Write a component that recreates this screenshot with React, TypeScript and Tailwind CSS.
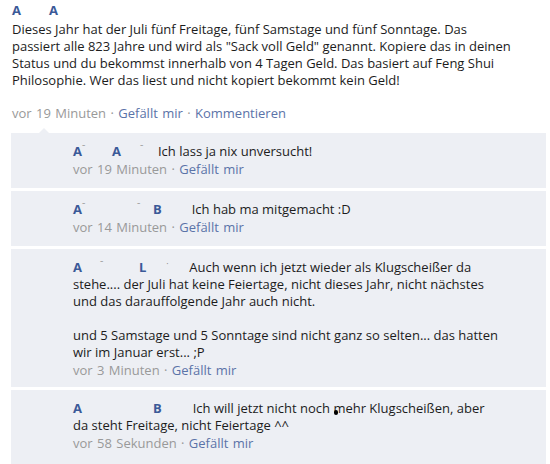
import React from "react";

const NAME = "text-[#3b5998] font-bold";

const Tick = ({ dot }: { dot?: boolean }) => (
  <span className="inline-block w-[3px] align-top text-[9px] leading-[10px] text-[#888]">
    {dot ? "·" : "ˉ"}
  </span>
);

const Meta = ({ time }: { time: string }) => (
  <div className="mt-[1px] text-[13px] leading-[17px] text-[#999] [word-spacing:1px]">
    {time} · <span className="text-[#5b73a8]">Gefällt mir</span>
  </div>
);

export default function App() {
  return (
    <div
      className="w-[550px] h-[464px] bg-white overflow-hidden text-[13px] text-[#1c1c1c]"
      style={{ fontFamily: '"Open Sans", "DejaVu Sans", sans-serif' }}
    >
      {/* Original post */}
      <div className="pl-3 pt-[2px]">
        <div className={`${NAME} leading-[17px]`}>
          A<span className="inline-block w-[28px]" />A
        </div>
        <div className="leading-[17px] mt-[2px]">
          <div>Dieses Jahr hat der Juli fünf Freitage, fünf Samstage und fünf Sonntage. Das</div>
          <div>passiert alle 823 Jahre und wird als "Sack voll Geld" genannt. Kopiere das in deinen</div>
          <div>Status und du bekommst innerhalb von 4 Tagen Geld. Das basiert auf Feng Shui</div>
          <div>Philosophie. Wer das liest und nicht kopiert bekommt kein Geld!</div>
        </div>
        <div className="mt-[16px] text-[13px] leading-[17px] text-[#999] [word-spacing:1px]">
          vor 19 Minuten · <span className="text-[#5b73a8]">Gefällt mir</span> ·{" "}
          <span className="text-[#5b73a8]">Kommentieren</span>
        </div>
      </div>

      {/* Comments */}
      <div className="relative ml-[11px] mt-[11px] w-[535px] flex flex-col gap-[3px]">
        <div className="absolute -top-[5px] left-[28px] w-0 h-0 border-x-[5px] border-x-transparent border-b-[5px] border-b-[#edeff4]" />

        <div className="bg-[#edeff4] pl-[62px] pt-[10px] pb-[10px] leading-[17px]">
          <div>
            <span className={NAME}>A</span>
            <Tick />
            <span className="inline-block w-[27px]" />
            <span className={NAME}>A</span>
            <span className="inline-block w-[19px]" />
            <Tick />
            <span className="inline-block w-[15px]" />
            Ich lass ja nix unversucht!
          </div>
          <Meta time="vor 19 Minuten" />
        </div>

        <div className="bg-[#edeff4] pl-[62px] pt-[10px] pb-[10px] leading-[17px]">
          <div>
            <span className={NAME}>A</span>
            <Tick />
            <span className="inline-block w-[52px]" />
            <Tick />
            <span className="inline-block w-[13px]" />
            <span className={NAME}>B</span>
            <span className="inline-block w-[30px]" />
            Ich hab ma mitgemacht :D
          </div>
          <Meta time="vor 14 Minuten" />
        </div>

        <div className="bg-[#edeff4] pl-[62px] pt-[10px] pb-[8px] leading-[17px]">
          <div>
            <span className={NAME}>A</span>
            <span className="inline-block w-[18px]" />
            <Tick />
            <span className="inline-block w-[36px]" />
            <span className={NAME}>L</span>
            <span className="inline-block w-[20px]" />
            <Tick dot />
            <span className="inline-block w-[20px]" />
            Auch wenn ich jetzt wieder als Klugscheißer da
          </div>
          <div>stehe.... der Juli hat keine Feiertage, nicht dieses Jahr, nicht nächstes</div>
          <div>und das darauffolgende Jahr auch nicht.</div>
          <div className="h-[17px]" />
          <div>und 5 Samstage und 5 Sonntage sind nicht ganz so selten... das hatten</div>
          <div>wir im Januar erst... ;P</div>
          <Meta time="vor 3 Minuten" />
        </div>

        <div className="bg-[#edeff4] pl-[62px] pt-[10px] pb-[12px] leading-[17px] relative">
          <div>
            <span className={NAME}>A</span>
            <span className="inline-block w-[71px]" />
            <span className={NAME}>B</span>
            <span className="inline-block w-[31px]" />
            Ich will jetzt nicht noch mehr Klugscheißen, aber
          </div>
          <div>da steht Freitage, nicht Feiertage ^^</div>
          <Meta time="vor 58 Sekunden" />
          <div className="absolute left-[323px] top-[20px] w-[4px] h-[5px] rounded-sm bg-black" />
        </div>
      </div>
    </div>
  );
}
